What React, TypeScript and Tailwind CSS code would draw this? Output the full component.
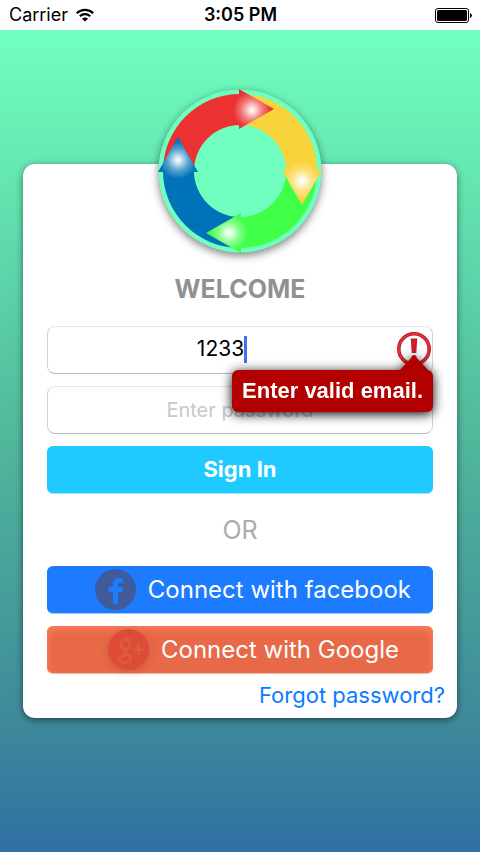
import { useState } from "react";

const fieldClass =
  "flex h-12 items-center justify-center rounded-lg border border-x-gray-300 border-t-gray-200 border-b-gray-400/70 bg-white";

function WifiIcon() {
  return (
    <svg viewBox="0 0 18 14" className="h-[14px] w-[18px]" fill="none" stroke="black" aria-hidden="true">
      <path d="M0.8 5.2 A11.6 11.6 0 0 1 17.2 5.2" strokeWidth="2.2" />
      <path d="M3.8 8.3 A7.4 7.4 0 0 1 14.2 8.3" strokeWidth="2.1" />
      <path d="M9 13.6 L6 10.7 A4.2 4.2 0 0 1 12 10.7 Z" fill="black" stroke="none" />
    </svg>
  );
}

function BatteryIcon() {
  return (
    <svg viewBox="0 0 37 15" className="h-[15px] w-[37px]" aria-hidden="true">
      <rect x="0.5" y="0.5" width="33" height="14" rx="2.5" fill="none" stroke="black" />
      <rect x="2" y="2" width="30" height="11" rx="1.5" />
      <path d="M35 5 a2.6 2.6 0 0 1 0 5 Z" />
    </svg>
  );
}

function StatusBar() {
  return (
    <header className="grid h-[30px] grid-cols-3 items-center bg-white pr-2 pl-[9px] text-lg text-black">
      <div className="flex items-center gap-2">
        <span>Carrier</span>
        <WifiIcon />
      </div>
      <time className="text-center font-semibold">3:05 PM</time>
      <div className="flex justify-end">
        <BatteryIcon />
      </div>
    </header>
  );
}

const glows = [
  { id: "red", cx: 94, cy: 21 },
  { id: "yellow", cx: 144, cy: 92 },
  { id: "green", cx: 71, cy: 144 },
  { id: "blue", cx: 20, cy: 71 },
];

function Logo() {
  return (
    <svg
      viewBox="0 0 164 164"
      className="h-[164px] w-[164px] overflow-visible drop-shadow-[0_3px_4px_rgba(0,0,0,0.5)]"
      role="img"
      aria-label="Logo"
    >
      <defs>
        {glows.map((g) => (
          <radialGradient key={g.id} id={g.id} gradientUnits="userSpaceOnUse" cx={g.cx} cy={g.cy} r="19">
            <stop offset="0" stopColor="#ffffff" />
            <stop offset="0.15" stopColor="#ffffff" stopOpacity="0.85" />
            <stop offset="0.55" stopColor="#ffffff" stopOpacity="0.35" />
            <stop offset="1" stopColor="#ffffff" stopOpacity="0" />
          </radialGradient>
        ))}
      </defs>
      <circle cx="82" cy="82" r="81.500" fill="#70ffbe" />
      <path d="M5 82 A77 77 0 0 1 82 5 V36 A46 46 0 0 0 36 82 Z" fill="#eb3131" />
      <path d="M82 5 A77 77 0 0 1 159 82 H128 A46 46 0 0 0 82 36 Z" fill="#f9d33c" />
      <path d="M159 82 A77 77 0 0 1 82 159 V128 A46 46 0 0 0 128 82 Z" fill="#40ff48" />
      <path d="M82 159 A77 77 0 0 1 5 82 H36 A46 46 0 0 0 82 128 Z" fill="#0072b8" />
      <path d="M81 0 L116 20 L81 40 Z" fill="#eb3131" />
      <path d="M70 6 H81 V0 L116 20 L81 40 V36 H70 Z" fill="url(#red)" />
      <path d="M124 81 H164 L144 116 Z" fill="#f9d33c" />
      <path d="M124 81 H128 V70 H158 V81 H164 L144 116 Z" fill="url(#yellow)" />
      <path d="M83 124 V164 L48 144 Z" fill="#40ff48" />
      <path d="M94 128 H83 V124 L48 144 L83 164 V158 H94 Z" fill="url(#green)" />
      <path d="M0 83 H40 L20 48 Z" fill="#0072b8" />
      <path d="M0 83 H6 V94 H36 V83 H40 L20 48 Z" fill="url(#blue)" />
    </svg>
  );
}

function ErrorIcon() {
  return (
    <svg viewBox="0 0 34 34" className="h-[34px] w-[34px]" aria-hidden="true">
      <circle cx="17" cy="17" r="15.200" fill="white" stroke="#b8141f" strokeWidth="3.600" />
      <circle cx="17" cy="17" r="15.200" fill="none" stroke="#e0323c" strokeWidth="2" />
      <path d="M13.700 6.500 H20.300 L19.300 21 H14.700 Z" fill="#c9202a" />
      <circle cx="17" cy="25.500" r="2.500" fill="#c9202a" />
    </svg>
  );
}

function FacebookIcon() {
  return (
    <svg viewBox="0 0 41 41" className="h-[41px] w-[41px]" aria-hidden="true">
      <circle cx="20.500" cy="20.500" r="20.500" fill="#3f5b9c" />
      <path
        d="M18 35 V23 H13.500 V18 H18 V15 C18 11 20 9 24 9 H28 V14 H25.500 C23.500 14 23 14.800 23 16.500 V18 H28 L27.400 23 H23 V35 Z"
        fill="#1d7bff"
      />
    </svg>
  );
}

function GoogleIcon() {
  return (
    <svg viewBox="0 0 41 41" className="h-[41px] w-[41px] drop-shadow-[0_2px_4px_rgba(120,30,10,0.2)]" aria-hidden="true">
      <circle cx="20.500" cy="20.500" r="20.500" fill="#dd4c39" />
      <g fill="none" stroke="#df5b40">
        <ellipse cx="17.500" cy="15.500" rx="4.300" ry="5" strokeWidth="2.600" />
        <path d="M24 10.500 H18" strokeWidth="1.600" />
        <path d="M18 21 C15 23 19 24 21 26 C25 30 21 33.500 17 33.500 C12 33.500 10 31 12 28.500 C13.500 26.700 16 26.500 19 26.300" strokeWidth="2.600" />
        <path d="M30.500 15.500 V26 M25 20.800 H36" strokeWidth="2.600" />
      </g>
    </svg>
  );
}

export default function App() {
  const [email, setEmail] = useState("1233");

  return (
    <div className="flex min-h-screen flex-col bg-[linear-gradient(180deg,#70ffbe_0%,#70ffbe_4%,#50b79b_52%,#3f8c9a_83%,#3070a3_100%)] font-['Inter','Liberation_Sans',sans-serif]">
      <StatusBar />
      <main className="mx-[23px] mt-[134px] mb-8 rounded-xl bg-white px-6 pb-[2px] shadow-[0_2px_7px_rgba(0,0,0,0.5)]">
        <div className="-mt-[75px] flex justify-center">
          <Logo />
        </div>
        <h1 className="text-center text-[25px] leading-[73px] font-bold text-[#919191]">WELCOME</h1>

        <form className="flex flex-col gap-3" onSubmit={(e) => e.preventDefault()}>
          <div className="relative">
            <div className={`${fieldClass} pr-[36px] pb-[2px]`}>
              <input
                type="text"
                aria-label="Email"
                aria-invalid="true"
                aria-describedby="email-error"
                value={email}
                onChange={(e) => setEmail(e.target.value)}
                className="[field-sizing:content] bg-transparent text-[21px] text-black outline-none"
              />
              <span className="h-[27px] w-[3px] bg-[#466ff0]" />
            </div>
            <div className="absolute top-[6px] right-[2px]">
              <ErrorIcon />
            </div>
            <div
              id="email-error"
              role="alert"
              className="absolute top-[29px] right-0 z-10 flex flex-col items-end drop-shadow-[0_2px_6px_rgba(0,0,0,1)]"
            >
              <svg viewBox="0 0 28 15" className="mr-[5px] h-[15px] w-[28px]" aria-hidden="true">
                <path d="M0 15 L12.500 1.500 Q14 0 15.500 1.500 L28 15 Z" fill="#b20000" />
              </svg>
              <p className="rounded-md bg-[#b20000] px-[10px] font-['Liberation_Sans',sans-serif] text-[22px] leading-[42px] font-bold whitespace-nowrap text-white">
                Enter valid email.
              </p>
            </div>
          </div>

          <div className={fieldClass}>
            <input
              type="password"
              aria-label="Password"
              placeholder="Enter password"
              className="w-full bg-transparent text-center text-xl outline-none placeholder:text-[#c8c8cd]"
            />
          </div>

          <button type="submit" className="h-12 rounded-md border-b border-b-[#a5e6fb] bg-[#1ecaff] text-[22px] font-bold text-white">
            Sign In
          </button>

          <p className="text-center text-[25px] leading-[48px] text-[#acacac]">OR</p>

          <button
            type="button"
            className="flex h-12 items-center justify-end gap-3 rounded-md border-b border-b-[#a5cbff] bg-[#1d7bff] pr-[22px] text-2xl text-white"
          >
            <FacebookIcon />
            Connect with facebook
          </button>
          <button
            type="button"
            className="flex h-12 items-center justify-end gap-3 rounded-md border-b border-b-[#f5b8a5] bg-[#e76948] pr-[34px] text-2xl text-white shadow-[inset_0_3px_8px_#ff7e60]"
          >
            <GoogleIcon />
            Connect with Google
          </button>
        </form>

        <div className="-mr-3 flex justify-end">
          <a href="#forgot" className="text-[22px] leading-[42px] text-[#0a7cff]">
            Forgot password?
          </a>
        </div>
      </main>
    </div>
  );
}
